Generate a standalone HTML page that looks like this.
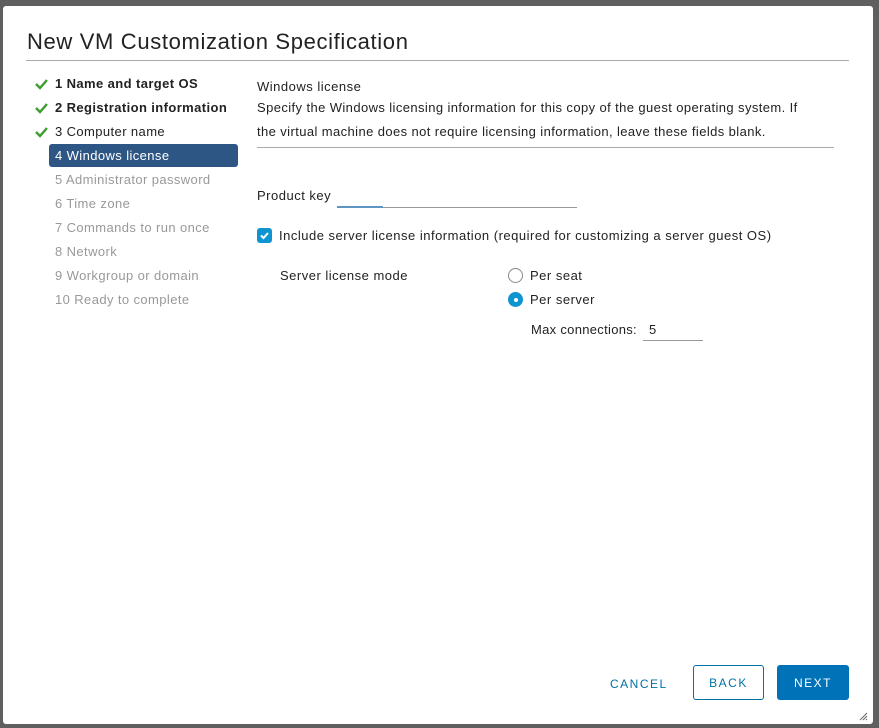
<!DOCTYPE html>
<html><head><style>
body{margin:0;width:879px;height:728px;background:#5f5f5f;font-family:"Liberation Sans",sans-serif;position:relative;overflow:hidden;color:#222}
.dlg{position:absolute;left:3px;top:6px;width:870px;height:718px;background:#fff;border-radius:3px}
.t{position:absolute;left:27px;top:29px;font-size:22px;color:#222;letter-spacing:0.65px}
.hr{position:absolute;left:26px;top:60px;width:823px;height:1px;background:#aaa}
.nav div{position:absolute;left:55px;font-size:13px;letter-spacing:0.4px}
.done{color:#222}
.dis{color:#999}
.act{background:#2d5684;color:#fff;border-radius:3px;left:49px!important;width:183px;height:23px;padding-left:6px;line-height:23px}
.chk{position:absolute;left:35px;font-size:13px;color:#3c9c2c;font-weight:bold}
.a{position:absolute;font-size:13px;color:#222;letter-spacing:0.5px}
</style></head><body>
<div class="dlg"></div>
<div class="t">New VM Customization Specification</div>
<div class="hr"></div>
<div class="nav">
<svg class="chk" style="top:78px" width="13" height="12"><path d="M1 6l4 4 7-8" stroke="#3c9c2c" stroke-width="2.4" fill="none"/></svg>
<svg class="chk" style="top:102px" width="13" height="12"><path d="M1 6l4 4 7-8" stroke="#3c9c2c" stroke-width="2.4" fill="none"/></svg>
<svg class="chk" style="top:126px" width="13" height="12"><path d="M1 6l4 4 7-8" stroke="#3c9c2c" stroke-width="2.4" fill="none"/></svg>
<div class="done" style="top:76px;font-weight:bold">1 Name and target OS</div>
<div class="done" style="top:100px;font-weight:bold">2 Registration information</div>
<div class="done" style="top:124px">3 Computer name</div>
<div class="act" style="top:144px">4 Windows license</div>
<div class="dis" style="top:172px">5 Administrator password</div>
<div class="dis" style="top:196px">6 Time zone</div>
<div class="dis" style="top:220px">7 Commands to run once</div>
<div class="dis" style="top:244px">8 Network</div>
<div class="dis" style="top:268px">9 Workgroup or domain</div>
<div class="dis" style="top:292px">10 Ready to complete</div>
</div>
<div class="a" style="left:257px;top:79px">Windows license</div>
<div class="a" style="left:257px;top:96px;line-height:24px;width:558px;letter-spacing:0.4px">Specify the Windows licensing information for this copy of the guest operating system. If the virtual machine does not require licensing information, leave these fields blank.</div>
<div style="position:absolute;left:257px;top:147px;width:577px;height:1px;background:#aaa"></div>
<div class="a" style="left:257px;top:188px">Product key</div>
<div style="position:absolute;left:337px;top:207px;width:240px;height:1px;background:#999"></div>
<div style="position:absolute;left:337px;top:206px;width:46px;height:2px;background:#5d95c4"></div>
<div style="position:absolute;left:257px;top:228px;width:15px;height:15px;background:#0f94d2;border-radius:3px"><svg width="15" height="15"><path d="M4 7.5l2.5 2.5 4.5-5" stroke="#fff" stroke-width="2" fill="none"/></svg></div>
<div class="a" style="left:279px;top:228px;letter-spacing:0.5px">Include server license information (required for customizing a server guest OS)</div>
<div class="a" style="left:280px;top:268px">Server license mode</div>
<div style="position:absolute;left:508px;top:268px;width:13px;height:13px;border:1px solid #888;border-radius:50%"></div>
<div class="a" style="left:530px;top:268px">Per seat</div>
<div style="position:absolute;left:508px;top:292px;width:15px;height:15px;background:#0f94d2;border-radius:50%"><div style="position:absolute;left:6px;top:6px;width:4px;height:4px;background:#fff;border-radius:50%"></div></div>
<div class="a" style="left:530px;top:292px">Per server</div>
<div class="a" style="left:531px;top:322px;letter-spacing:0.3px">Max connections:</div>
<div class="a" style="left:649px;top:322px">5</div>
<div style="position:absolute;left:643px;top:340px;width:60px;height:1px;background:#999"></div>
<div style="position:absolute;left:610px;top:677px;font-size:12px;letter-spacing:1.5px;color:#0072a3">CANCEL</div>
<div style="position:absolute;left:693px;top:665px;width:71px;height:35px;border:1px solid #0072a3;border-radius:3px;box-sizing:border-box;color:#0072a3;font-size:12px;letter-spacing:1.5px;text-align:center;line-height:35px">BACK</div>
<div style="position:absolute;left:777px;top:665px;width:72px;height:35px;background:#0072b8;border-radius:3px;color:#fff;font-size:12px;letter-spacing:1.5px;text-align:center;line-height:37px">NEXT</div>
<svg style="position:absolute;left:858px;top:711px" width="10" height="10"><path d="M9 2L2 9M9 5L5 9M9 8L8 9" stroke="#666" stroke-width="1"/></svg>
</body></html>
